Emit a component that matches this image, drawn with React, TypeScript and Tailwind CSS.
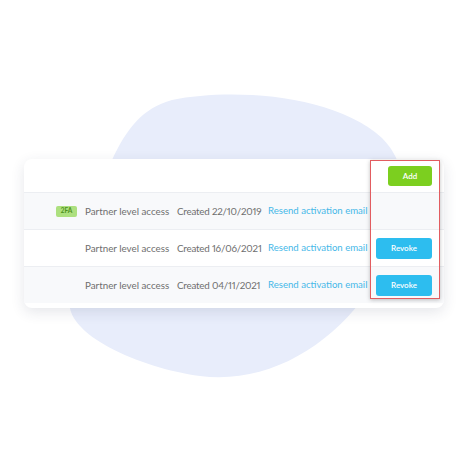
import React from 'react';

type Invite = {
  twoFactor: boolean;
  created: string;
  revokable: boolean;
};

const invites: Invite[] = [
  { twoFactor: true, created: '22/10/2019', revokable: false },
  { twoFactor: false, created: '16/06/2021', revokable: true },
  { twoFactor: false, created: '04/11/2021', revokable: true },
];

const Blob = () => (
  <svg className="absolute inset-0" width="468" height="468" viewBox="0 0 468 468" aria-hidden="true">
    <path
      d="M172 100 C232 88 334 94 382 138 C420 176 404 240 362 300 C322 352 262 384 200 376 C140 368 62 334 70 298 C78 258 92 200 112 160 C126 130 142 108 172 100 Z"
      fill="#e8edfb"
    />
  </svg>
);

const InviteRow = ({ invite, shaded }: { invite: Invite; shaded: boolean }) => (
  <div
    className={`flex h-[37px] items-center whitespace-nowrap border-t border-[#eceef2] pl-[32px] pr-[12px] ${
      shaded ? 'bg-[#f8f9fb]' : 'bg-white'
    }`}
  >
    <div className="w-[21px] shrink-0">
      {invite.twoFactor && (
        <span className="flex h-[11px] w-[21px] items-center justify-center rounded-[2px] bg-[#ade07f] text-[6.5px] font-bold text-[#4f9220]">
          2FA
        </span>
      )}
    </div>
    <span className="ml-[8px] w-[92px] shrink-0 text-[9.8px] text-[#6e6e6e]">Partner level access</span>
    <span className="w-[91px] shrink-0 text-[9.8px] tracking-[-0.2px] text-[#6e6e6e] proportional-nums">
      Created {invite.created}
    </span>
    <span className="w-[100px] shrink-0 text-[9.6px] text-[#46b8e8]">Resend activation email</span>
    <div className="flex flex-1 justify-end">
      {invite.revokable && (
        <button
          type="button"
          className="h-[21px] w-[56px] rounded-[3px] bg-[#2dbdef] text-[8px] font-semibold text-white"
        >
          Revoke
        </button>
      )}
    </div>
  </div>
);

export default function App() {
  return (
    <div className="relative h-[468px] w-[468px] overflow-hidden bg-white" style={{ fontFamily: 'Lato, "Open Sans", sans-serif' }}>
      <Blob />
      <div className="relative px-[24px] pt-[159px]">
        <div className="relative overflow-hidden rounded-[8px] bg-white pb-[5px] shadow-[0_4px_14px_rgba(40,50,80,0.12)]">
          <div className="flex h-[33px] items-center justify-end pr-[12px]">
            <button
              type="button"
              className="h-[20px] w-[44px] rounded-[3px] bg-[#7ccf1f] text-[8px] font-semibold text-white"
            >
              Add
            </button>
          </div>
          {invites.map((invite, i) => (
            <InviteRow key={invite.created} invite={invite} shaded={i !== 1} />
          ))}
        </div>
        <div className="absolute left-[370px] top-[160px] h-[139px] w-[70px] border-[1.5px] border-[#e25c60] shadow-[0_1px_4px_rgba(0,0,0,0.25)]" />
      </div>
    </div>
  );
}
